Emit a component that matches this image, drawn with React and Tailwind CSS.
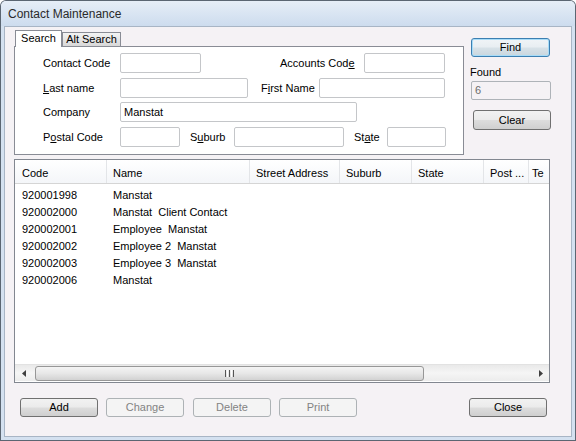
import React from "react";

const btn =
  "flex items-center justify-center h-[19px] w-[78px] rounded-[3px] border border-[#707070] bg-[linear-gradient(#f2f2f2_0%,#ebebeb_48%,#dddddd_52%,#cfcfcf_100%)] text-black";
const btnOff =
  "flex items-center justify-center h-[19px] w-[78px] rounded-[3px] border border-[#adb2b5] bg-[#f4f4f4] text-[#838383]";
const input = "h-[20px] rounded-[2px] border border-[#c4c6c9] bg-white pl-[3px] flex items-center";

const U = ({ children }) => <span className="underline underline-offset-[1px]">{children}</span>;

const rows = [
  ["920001998", "Manstat"],
  ["920002000", "Manstat  Client Contact"],
  ["920002001", "Employee  Manstat"],
  ["920002002", "Employee 2  Manstat"],
  ["920002003", "Employee 3  Manstat"],
  ["920002006", "Manstat"],
];

const cols = [
  { name: "Code", w: "w-[92px]", pl: "pl-[7px]" },
  { name: "Name", w: "w-[143px]", pl: "pl-[6px]" },
  { name: "Street Address", w: "w-[90px]", pl: "pl-[6px]" },
  { name: "Suburb", w: "w-[72px]", pl: "pl-[6px]" },
  { name: "State", w: "w-[72px]", pl: "pl-[6px]" },
  { name: "Post ...", w: "w-[45px]", pl: "pl-[6px]" },
];

export default function App() {
  return (
    <div className="w-[576px] h-[441px] bg-[#5b6672] p-px rounded-t-[6px] overflow-hidden font-['Liberation_Sans',Arial,sans-serif] text-[11px] text-black leading-none">
      <div className="h-full flex flex-col bg-[#d4e1f0] rounded-t-[5px]">
        {/* TITLE */}
        <div className="h-[25px] flex items-center pl-[7px] text-[12px] text-[#2a2a2a] bg-gradient-to-b from-[#e6eef7] to-[#cddcee] rounded-t-[5px]">
          Contact Maintenance
        </div>

        <div className="flex-1 mx-[3px] mb-[3px] border border-[#a8b5c5] bg-[#f5f2f5] flex flex-col pl-[9px] pt-[3px]">
          {/* TOP */}
          <div className="flex items-start">
            <div className="w-[450px] flex flex-col">
              <div className="flex items-end h-[16px] pl-px">
                <div className="relative z-10 -mb-px w-[47px] h-[17px] border border-b-0 border-[#898c95] bg-white flex items-center justify-center pb-[1px]">
                  Search
                </div>
                <div className="w-[59px] h-[14px] border border-b-0 border-[#898c95] bg-gradient-to-b from-[#f3f3f3] to-[#d8d8d8] flex items-center justify-center">
                  Alt Search
                </div>
              </div>
              <div className="h-[109px] border border-[#898c95] bg-white flex flex-col pl-[28px] pt-[6px]">
                <div className="flex items-center">
                  <div className="w-[77px]">Contact Code</div>
                  <div className={`${input} w-[81px]`} />
                  <div className="ml-[79px] w-[84px]">
                    Accounts Cod<U>e</U>
                  </div>
                  <div className={`${input} w-[81px]`} />
                </div>
                <div className="flex items-center mt-[5px]">
                  <div className="w-[77px]">
                    <U>L</U>ast name
                  </div>
                  <div className={`${input} w-[128px]`} />
                  <div className="ml-[13px] w-[58px]">
                    F<U>i</U>rst Name
                  </div>
                  <div className={`${input} w-[126px]`} />
                </div>
                <div className="flex items-center mt-[4px]">
                  <div className="w-[77px]">Company</div>
                  <div className={`${input} w-[237px]`}>Manstat</div>
                </div>
                <div className="flex items-center mt-[5px]">
                  <div className="w-[77px]">
                    P<U>o</U>stal Code
                  </div>
                  <div className={`${input} w-[60px]`} />
                  <div className="ml-[10px] w-[44px]">
                    S<U>u</U>burb
                  </div>
                  <div className={`${input} w-[110px]`} />
                  <div className="ml-[10px] w-[33px]">
                    St<U>a</U>te
                  </div>
                  <div className={`${input} w-[59px]`} />
                </div>
              </div>
            </div>

            {/* RIGHT COLUMN */}
            <div className="ml-[7px] w-[80px] flex flex-col">
              <div className="mt-[8px] flex items-center justify-center h-[19px] w-[79px] rounded-[3px] border border-[#3c7fb1] shadow-[inset_0_0_0_1px_#a7dcf8] bg-[linear-gradient(#f0f4f7_0%,#e8eef2_48%,#d8e2e8_52%,#c9d6de_100%)]">
                Find
              </div>
              <div className="mt-[9px] -ml-px h-[13px] flex items-center">Found</div>
              <div className="mt-[2px] h-[19px] w-[80px] border border-[#aeb3b8] rounded-[2px] bg-[#f5f2f5] flex items-center pl-[3px] text-[#6d6d6d]">
                6
              </div>
              <div className={`${btn} mt-[10px] ml-[2px] h-[20px]`}>Clear</div>
            </div>
          </div>

          {/* LIST */}
          <div className="mt-[4px] w-[536px] h-[224px] border border-[#828790] bg-white flex flex-col overflow-hidden">
            <div className="h-[24px] flex border-b border-[#d5d5d5] bg-gradient-to-b from-white to-[#f4f6f9] shrink-0">
              {cols.map((c) => (
                <div key={c.name} className={`${c.w} ${c.pl} pt-[3px] h-full border-r border-[#e3e5e8] flex items-center shrink-0`}>
                  {c.name}
                </div>
              ))}
              <div className="pl-[3px] pt-[3px] flex items-center overflow-hidden">Te</div>
            </div>
            <div className="pt-[3px] flex flex-col">
              {rows.map((r) => (
                <div key={r[0]} className="h-[17px] flex items-center">
                  <div className="w-[92px] pl-[7px]">{r[0]}</div>
                  <div className="pl-[6px] whitespace-pre">{r[1]}</div>
                </div>
              ))}
            </div>
            <div className="flex-1" />
            {/* SCROLLBAR */}
            <div className="h-[17px] mb-px flex items-center bg-gradient-to-b from-[#e9e9e9] via-[#f5f5f5] to-[#ececec] border-t border-[#e2e2e2] shrink-0">
              <div className="w-[17px] h-full flex items-center justify-center">
                <svg width="4" height="7" viewBox="0 0 4 7">
                  <path d="M4 0 L0 3.5 L4 7 Z" fill="#3f3f3f" />
                </svg>
              </div>
              <div className="ml-[3px] w-[389px] h-[15px] rounded-[3px] border border-[#979797] bg-gradient-to-b from-[#f4f4f4] via-[#e7e7e7] to-[#d2d2d2] flex items-center justify-center">
                <div className="flex gap-[1px]">
                  <div className="w-px h-[7px] bg-[#555]" />
                  <div className="w-px h-[7px] bg-white" />
                  <div className="w-px h-[7px] bg-[#555]" />
                  <div className="w-px h-[7px] bg-white" />
                  <div className="w-px h-[7px] bg-[#555]" />
                </div>
              </div>
              <div className="flex-1" />
              <div className="w-[17px] h-full flex items-center justify-center">
                <svg width="4" height="7" viewBox="0 0 4 7">
                  <path d="M0 0 L4 3.5 L0 7 Z" fill="#3f3f3f" />
                </svg>
              </div>
            </div>
          </div>

          {/* BUTTONS */}
          <div className="mt-[15px] flex items-center">
            <div className={`${btn} ml-[6px]`}>Add</div>
            <div className={`${btnOff} ml-[8px]`}>Change</div>
            <div className={`${btnOff} ml-[9px]`}>Delete</div>
            <div className={`${btnOff} ml-[8px]`}>Print</div>
            <div className={`${btn} ml-[112px]`}>Close</div>
          </div>
        </div>
      </div>
    </div>
  );
}
